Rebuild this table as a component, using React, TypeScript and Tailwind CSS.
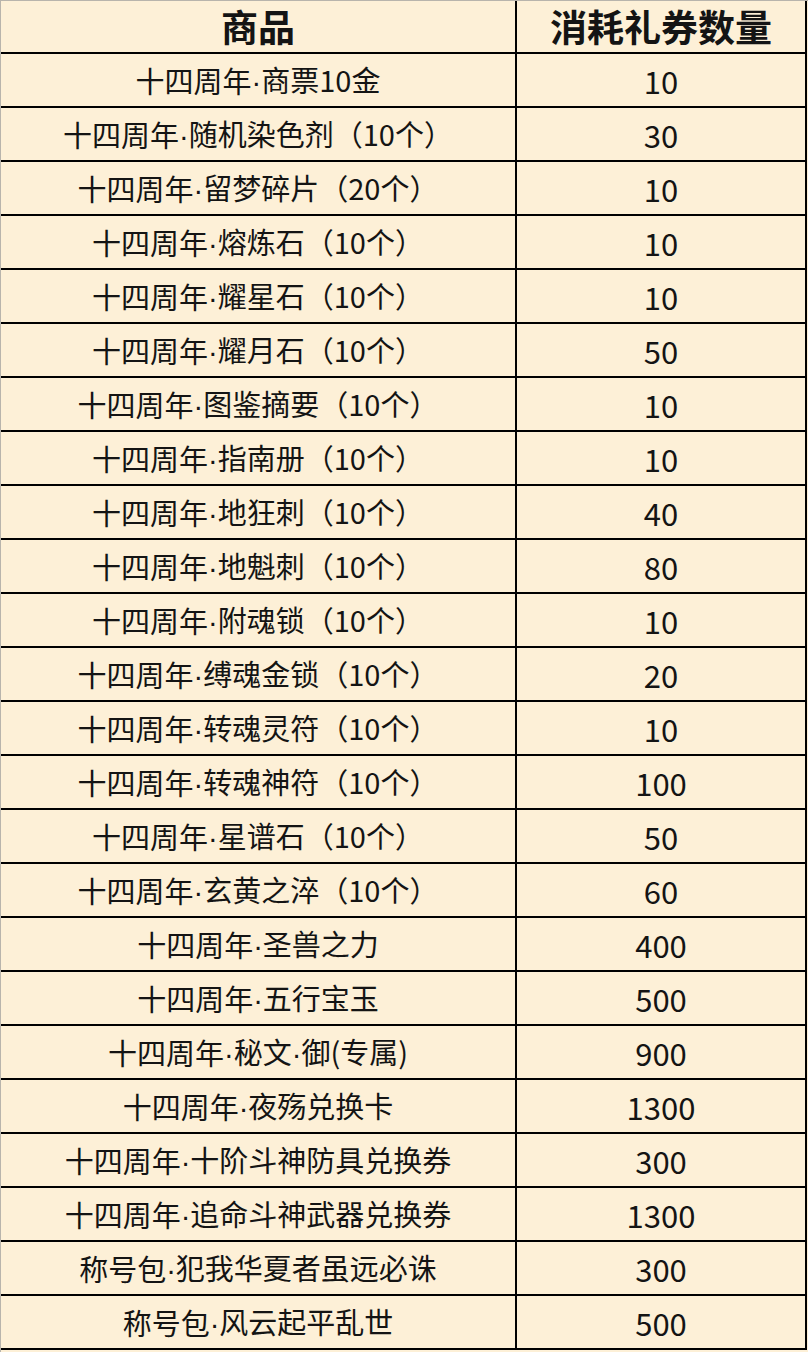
const rows: [string, string][] = [
  ['十四周年·商票10金', '10'],
  ['十四周年·随机染色剂（10个）', '30'],
  ['十四周年·留梦碎片（20个）', '10'],
  ['十四周年·熔炼石（10个）', '10'],
  ['十四周年·耀星石（10个）', '10'],
  ['十四周年·耀月石（10个）', '50'],
  ['十四周年·图鉴摘要（10个）', '10'],
  ['十四周年·指南册（10个）', '10'],
  ['十四周年·地狂刺（10个）', '40'],
  ['十四周年·地魁刺（10个）', '80'],
  ['十四周年·附魂锁（10个）', '10'],
  ['十四周年·缚魂金锁（10个）', '20'],
  ['十四周年·转魂灵符（10个）', '10'],
  ['十四周年·转魂神符（10个）', '100'],
  ['十四周年·星谱石（10个）', '50'],
  ['十四周年·玄黄之淬（10个）', '60'],
  ['十四周年·圣兽之力', '400'],
  ['十四周年·五行宝玉', '500'],
  ['十四周年·秘文·御(专属)', '900'],
  ['十四周年·夜殇兑换卡', '1300'],
  ['十四周年·十阶斗神防具兑换券', '300'],
  ['十四周年·追命斗神武器兑换券', '1300'],
  ['称号包·犯我华夏者虽远必诛', '300'],
  ['称号包·风云起平乱世', '500'],
];

// the CJK font draws a full-width middle dot, the picture has a narrow one
function Name({ text }: { text: string }) {
  const parts = text.split('·');
  return (
    <>
      {parts.map((p, i) => (
        <span key={i}>
          {i > 0 && <span style={{ fontFamily: '"Liberation Sans", sans-serif' }}>·</span>}
          {p}
        </span>
      ))}
    </>
  );
}

export default function App() {
  return (
    <div
      className="w-[808px] h-[1352px] bg-[#fdf0d7] text-[#141414] border-t border-l border-[#b8b4ac]"
      style={{ fontFamily: '"Noto Sans CJK SC", "Noto Sans", sans-serif' }}
    >
      <div className="border-r-2 border-black w-[806px]">
        {/* header */}
        <div className="flex h-[53px] border-b-2 border-black">
          <div className="w-[516px] border-r-2 border-black flex items-center justify-center text-[37px] font-bold">
            商品
          </div>
          <div className="flex-1 flex items-center justify-center text-[37px] font-bold">
            消耗礼券数量
          </div>
        </div>
        {rows.map(([name, cost], i) => (
          <div key={i} className="flex h-[54px] border-b-2 border-black">
            <div className="w-[516px] border-r-2 border-black flex items-center justify-center text-[29px] pt-0.5 whitespace-nowrap">
              <Name text={name} />
            </div>
            <div className="flex-1 flex items-center justify-center text-[31px] pt-0.5">
              {cost}
            </div>
          </div>
        ))}
      </div>
    </div>
  );
}
